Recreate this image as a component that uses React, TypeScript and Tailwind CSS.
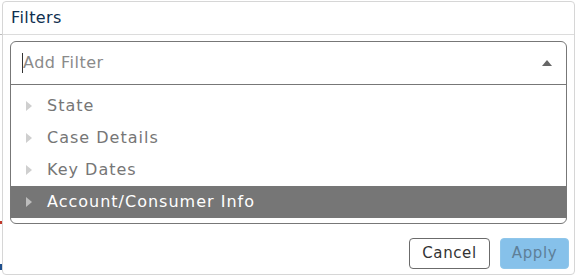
import React from 'react';

const ITEMS = ['State', 'Case Details', 'Key Dates', 'Account/Consumer Info'];

export default function App() {
  const active = 3;
  return (
    <div
      className="relative h-[276px] w-[576px] overflow-hidden bg-white"
      style={{ fontFamily: '"DejaVu Sans", sans-serif' }}
    >
      {/* background page bits peeking out on the left */}
      <div className="absolute left-0 top-[34px] h-px w-[3px] bg-[#bbb]" />
      <div className="absolute left-0 top-[221px] h-[3px] w-[2px] bg-[#c0392b]" />
      <div className="absolute left-0 top-[264px] h-[6px] w-[2px] bg-[#1e4e8c]" />

      {/* modal */}
      <div className="absolute left-[2px] top-[1px] flex h-[274px] w-[573px] flex-col rounded-[4px] border border-[#d6d6d6] bg-white">
        <div className="flex h-[33px] items-center border-b border-[#dcdcdc] px-[8px]">
          <span className="text-[16px] leading-none tracking-[0.4px] text-[#0f2f4f]">Filters</span>
        </div>

        <div className="px-[7px] pt-[6px]">
          <div className="rounded-[6px] border border-[#777]">
            <div className="flex h-[43px] items-center border-b border-[#777] pl-[11px] pr-[14px]">
              <span className="h-[20px] w-px bg-[#333]" />
              <span className="flex-1 text-[16px] tracking-[0.5px] text-[#8a8a8a]">Add Filter</span>
              <svg width="10" height="6" viewBox="0 0 10 6">
                <path d="M0 6 L5 0 L10 6 Z" fill="#666" />
              </svg>
            </div>
            <div className="py-[5px]">
              {ITEMS.map((item, i) => (
                <div
                  key={item}
                  className={
                    i === active
                      ? 'flex h-[32px] items-center bg-[#767676] pl-[15px] text-white'
                      : 'flex h-[32px] items-center pl-[15px] text-[#767676]'
                  }
                >
                  <svg width="6" height="10" viewBox="0 0 6 10" className="mr-[15px]">
                    <path d="M0 0 L6 5 L0 10 Z" fill={i === active ? '#bdbdbd' : '#cfcfcf'} />
                  </svg>
                  <span className="text-[16px] tracking-[1px]">{item}</span>
                </div>
              ))}
            </div>
          </div>
        </div>

        <div className="mt-auto flex justify-end gap-[10px] px-[5px] pb-[5px]">
          <button className="h-[31px] w-[81px] rounded-[4px] border border-[#6b6b6b] bg-white text-[15px] tracking-[0.6px] text-[#333]">
            Cancel
          </button>
          <button className="h-[31px] w-[69px] rounded-[4px] border border-[#8fc6ea] bg-[#86c1ea] text-[15px] tracking-[0.6px] text-[#5e7f98]">
            Apply
          </button>
        </div>
      </div>
    </div>
  );
}
